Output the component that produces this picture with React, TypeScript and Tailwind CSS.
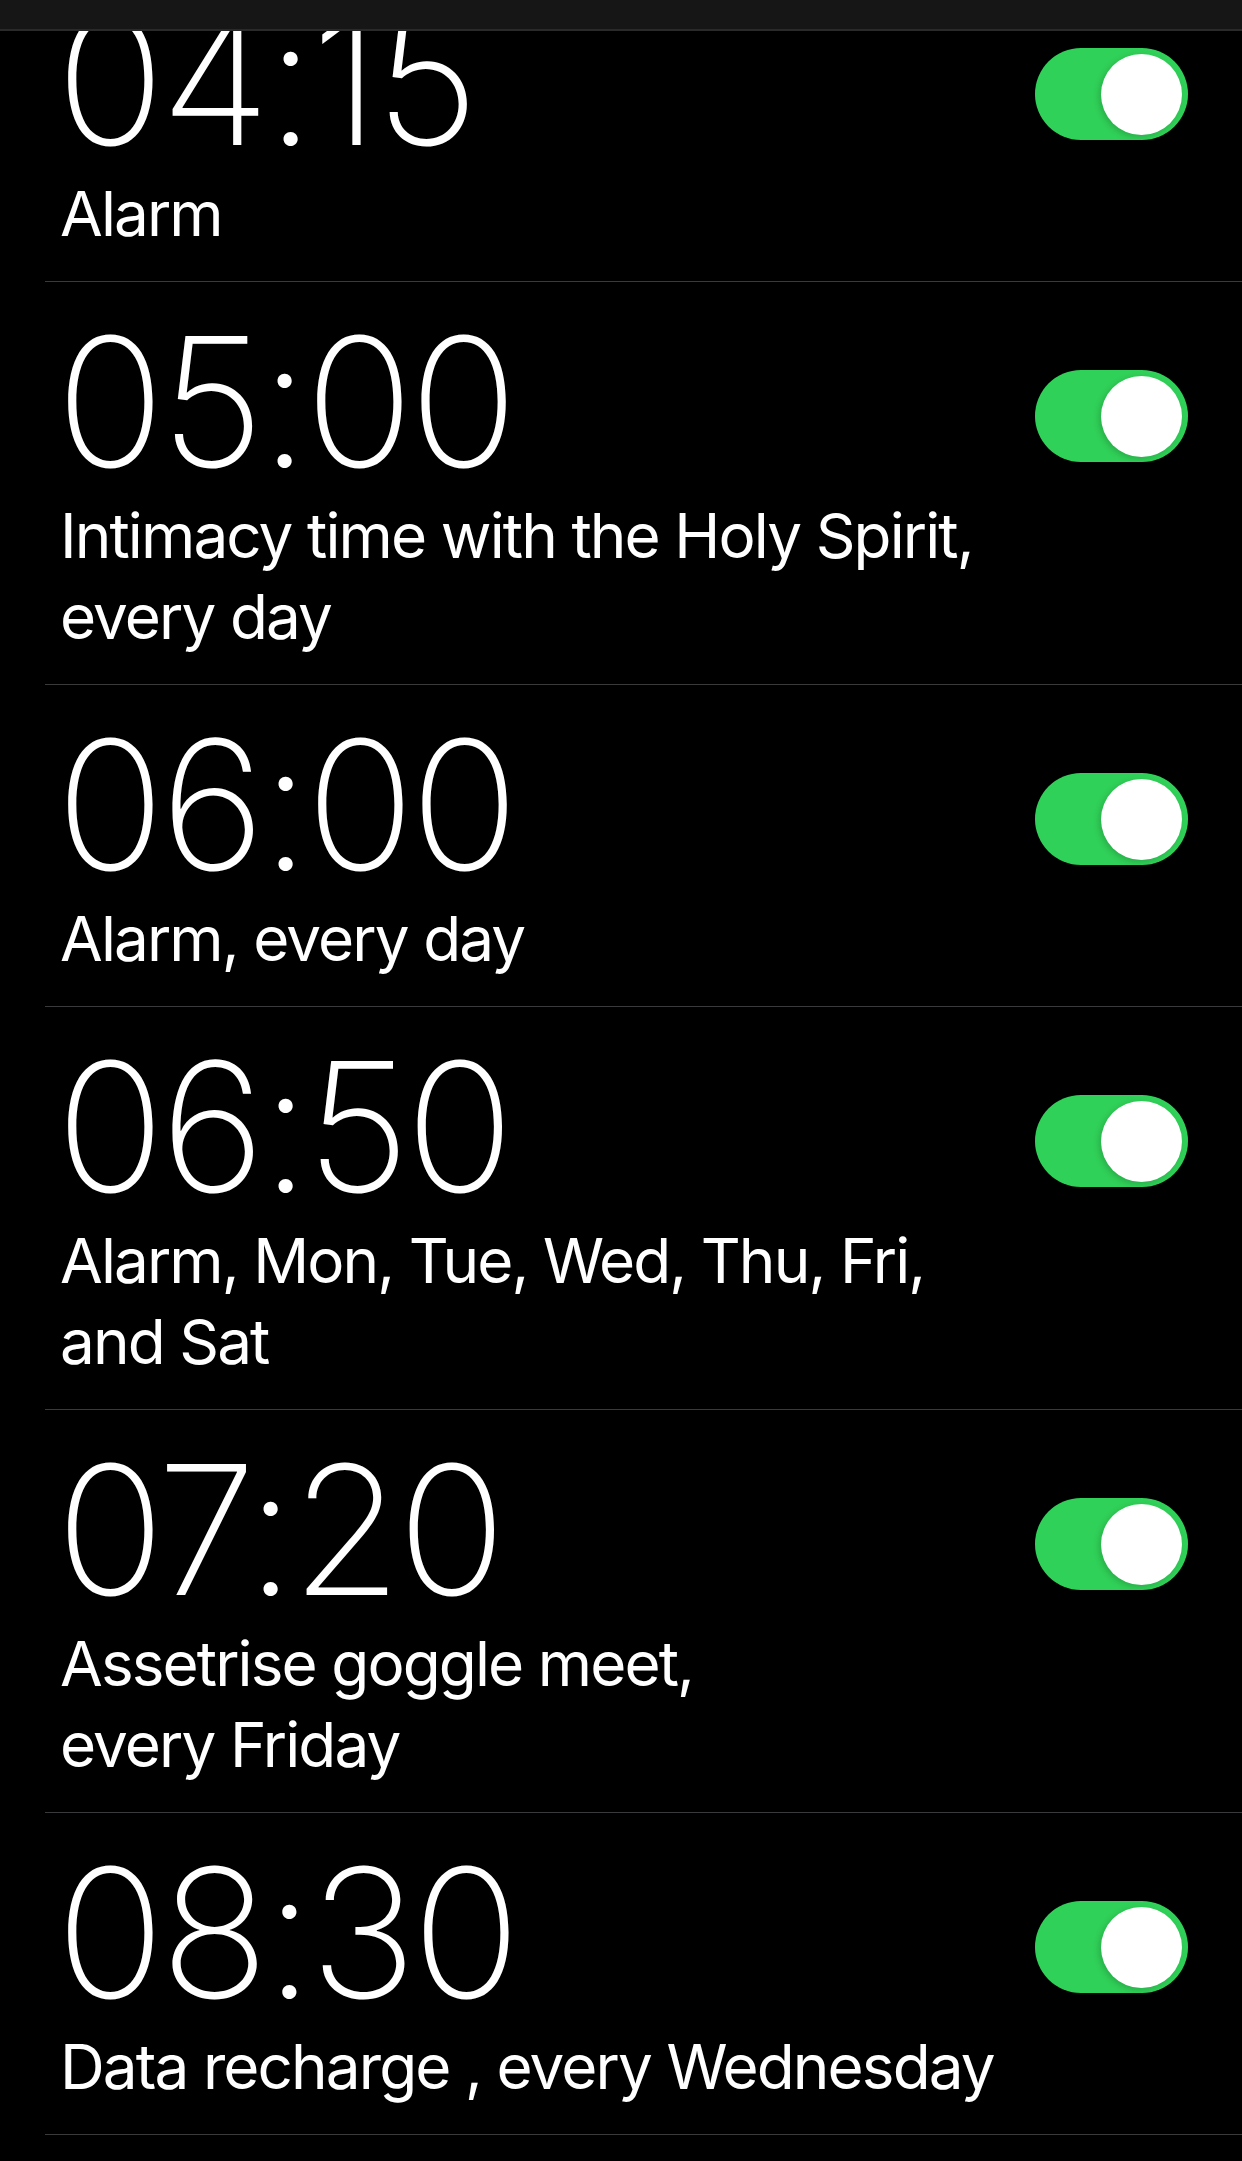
import React from "react";

type Alarm = { time: string; lines: string[] };

const alarms: Alarm[] = [
  { time: "04:15", lines: ["Alarm"] },
  { time: "05:00", lines: ["Intimacy time with the Holy Spirit,", "every day"] },
  { time: "06:00", lines: ["Alarm, every day"] },
  { time: "06:50", lines: ["Alarm, Mon, Tue, Wed, Thu, Fri,", "and Sat"] },
  { time: "07:20", lines: ["Assetrise goggle meet,", "every Friday"] },
  { time: "08:30", lines: ["Data recharge , every Wednesday"] },
];

function Toggle() {
  return (
    <div className="mt-[88px] flex h-[92px] w-[153px] shrink-0 items-center justify-end rounded-full bg-[#30d158] pr-[6px]">
      <div className="h-[81px] w-[81px] rounded-full bg-white shadow-[-2px_2px_6px_rgba(0,0,0,0.18)]" />
    </div>
  );
}

function Row({ alarm, first }: { alarm: Alarm; first?: boolean }) {
  return (
    <div
      className={
        "flex items-start border-b border-[#3a3a3c] pr-[54px] " +
        (first ? "-mt-[71px]" : "")
      }
    >
      <div className="min-w-0 flex-1 pl-[15px] pt-[30px] pb-[27px]">
        <div className="-ml-[4px] text-[180px] leading-[180px] font-[150] tracking-[-4.5px] text-white [font-family:Inter,sans-serif]">
          {alarm.time}
        </div>
        <div className="mt-[3px] text-[62px] leading-[81px] tracking-[-1.9px] text-white [font-family:Inter,sans-serif]">
          {alarm.lines.map((l, i) => (
            <div key={i} className="whitespace-nowrap">
              {l}
            </div>
          ))}
        </div>
      </div>
      <Toggle />
    </div>
  );
}

export default function App() {
  return (
    <div className="h-[2161px] w-[1242px] overflow-hidden bg-black">
      <div className="relative z-10 h-[31px] border-b-2 border-[#2a2a2a] bg-[#161616]" />
      <div className="ml-[45px]">
        {alarms.map((a, i) => (
          <Row key={a.time} alarm={a} first={i === 0} />
        ))}
      </div>
    </div>
  );
}
